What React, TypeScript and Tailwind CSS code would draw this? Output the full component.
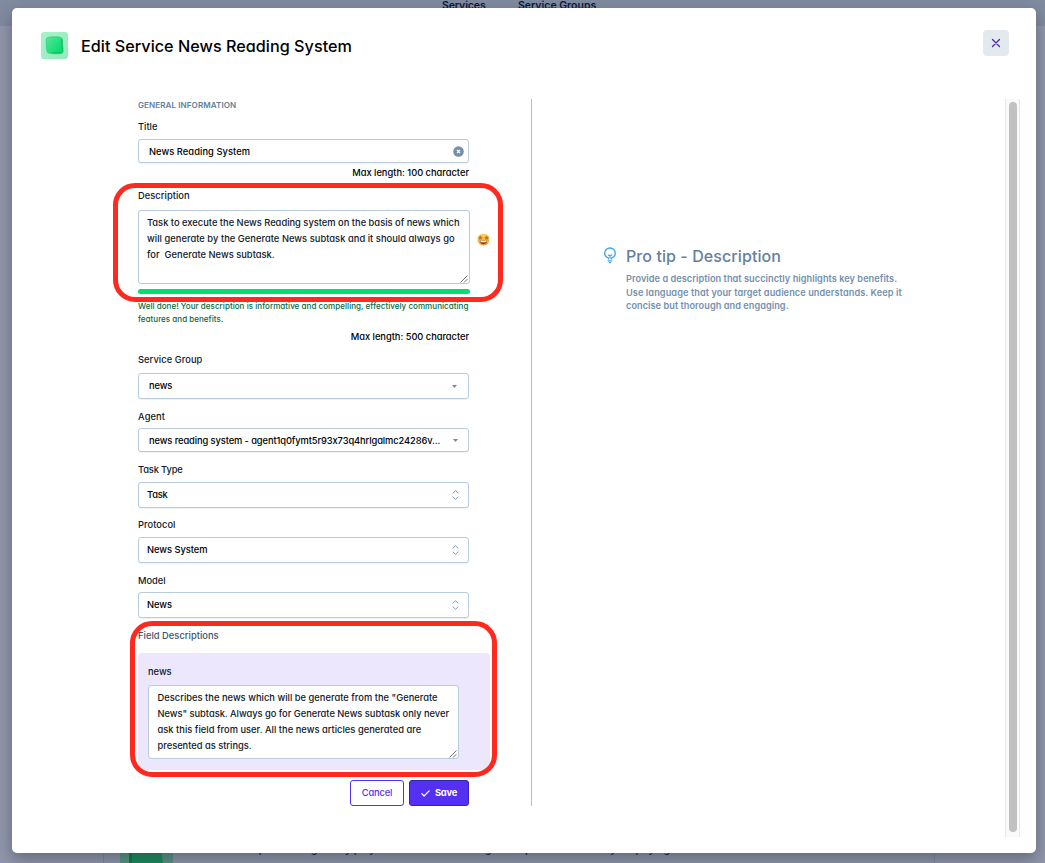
import type { ReactNode } from 'react';

function Label({ children, className = '' }: { children: ReactNode; className?: string }) {
  return (
    <div className={`h-3 whitespace-nowrap text-[9.3px] leading-3 font-[450] text-[#0f1728] ${className}`}>
      {children}
    </div>
  );
}

function Field({ children, className = '' }: { children: ReactNode; className?: string }) {
  return (
    <div
      className={`flex w-[331px] items-center justify-between rounded-[3px] border border-[#b9cbdd] bg-white text-[9.3px] font-medium whitespace-nowrap text-black shadow-[0_1px_1px_rgba(15,23,42,0.06)] ${className}`}
    >
      {children}
    </div>
  );
}

function Caret() {
  return (
    <svg width="5" height="3" viewBox="0 0 5 3">
      <path d="M0 0h5L2.5 3z" fill="#6f8cab" />
    </svg>
  );
}

function UpDown() {
  return (
    <svg className="mr-[9px]" width="7" height="10" viewBox="0 0 7 10" fill="none" stroke="#7f99b4" strokeLinecap="round" strokeLinejoin="round">
      <path d="M1 3.1 3.5.7 6 3.1M1 6.9l2.5 2.4L6 6.9" />
    </svg>
  );
}

function Grip() {
  return (
    <svg className="absolute right-px bottom-0" width="8" height="8" viewBox="0 0 8 8" stroke="#4b4b4b" strokeWidth="0.8">
      <path d="M.5 7.5l7-7M4 7.5 7.5 4" />
    </svg>
  );
}

function StarEyes() {
  return (
    <svg width="13" height="13" viewBox="0 0 13 13">
      <defs>
        <linearGradient id="face" x1="0" y1="0" x2="0" y2="1">
          <stop offset="0" stopColor="#ffd75a" />
          <stop offset="1" stopColor="#ef9632" />
        </linearGradient>
      </defs>
      <circle cx="6.5" cy="6.5" r="6" fill="url(#face)" />
      <path d="M2.9 7.3c2.2.7 5 .7 7.2 0 0 2.4-1.5 4-3.6 4S2.9 9.7 2.9 7.3z" fill="#8a4518" />
      <path d="M3.3 7.6c2 .6 4.4.6 6.4 0-.1.7-.3 1-.5 1.3-1.7.4-3.700.4-5.400 0z" fill="#fff" />
      <path
        d="M3.4 2.3l.7 1.500 1.700.1-1.200 1.200.4 1.700-1.500-.8-1.500.9.2-1.700L.8 4.100l1.800-.3zM9.6 2.300l.8 1.500 1.800.3-1.400 1.100.2 1.700-1.500-.9-1.500.8.4-1.700-1.200-1.200 1.700-.1z"
        fill="#d0701f"
      />
    </svg>
  );
}

function CubeIcon() {
  return (
    <svg width="27" height="27" viewBox="0 0 27 27">
      <defs>
        <linearGradient id="tile" x1="0" y1="0" x2="1" y2="1">
          <stop offset="0" stopColor="#a6f3cb" />
          <stop offset="1" stopColor="#98e7bd" />
        </linearGradient>
        <linearGradient id="cube" x1="0" y1="0" x2="1" y2="1">
          <stop offset="0" stopColor="#58e69a" />
          <stop offset="0.8" stopColor="#0bdc70" />
          <stop offset="1" stopColor="#20e680" />
        </linearGradient>
      </defs>
      <rect width="27" height="27" rx="3" fill="url(#tile)" />
      <path
        d="M7.300 5.300C11.500 4.600 16 4.700 19.200 5.200c1.400.2 2 .9 2.100 2.100.3 3.900.4 8 .9 11.700.1 1.700-.9 2.600-2.500 2.700-3.700.2-7.300.3-10.900-.3-1.900-.3-2.700-1-2.900-2.600-.5-3.900-.8-7.400-.7-10.900 0-1.500.7-2.400 2.100-2.600z"
        fill="url(#cube)"
        stroke="#2cc878"
        strokeWidth="0.7"
      />
      <path d="M20.600 7c.2 4 .3 7.500.8 11.400 0 1.500-.7 2.200-2 2.300l-8 .2" fill="none" stroke="#0daa58" strokeWidth="0.7" />
    </svg>
  );
}

export default function App() {
  return (
    <div className="relative h-[863px] w-[1045px] overflow-hidden bg-[#9196aa] font-['Inter',sans-serif] [font-feature-settings:'cv11','calt'_0]">
      <div className="flex h-[863px] flex-col justify-between">
        <header className="flex h-[26px] bg-[#808b9f] pl-[442px] text-[10.5px] leading-3 font-semibold text-[#0b1740]">
          <span className="w-[76px] tracking-[-0.1px]">Services</span>
          <span>Service Groups</span>
        </header>
        <div className="ml-[103px] flex h-[20px] w-[832px] overflow-hidden border-x border-[#7f8799] bg-[#8d96a7] pl-4">
          <svg width="53" height="20" viewBox="0 0 53 20">
            <path d="M0 0h53v20H0z" fill="#579580" />
            <path d="M9 0h31l3 20H9z" fill="#188b5b" />
            <path d="M9 0h3v20H9z" fill="#087b4b" />
          </svg>
          <p className="mt-[1px] ml-[74px] text-[10.5px] leading-3 font-medium tracking-[-0.02px] whitespace-nowrap text-[#0b1740]">
            experience light way player and then connecting a competent model for your paying
          </p>
        </div>
      </div>

      <main className="absolute top-2 left-3 h-[845px] w-[1024px] rounded-[5px] bg-white shadow-[0_6px_16px_rgba(30,41,59,0.4)]">
        <header className="flex h-[91px] items-start justify-between pr-[27px] pl-[29px]">
          <div className="flex items-center pt-6">
            <CubeIcon />
            <h1 className="ml-[13px] text-[16.2px] leading-6 font-[450] tracking-[0.02px] whitespace-nowrap text-black">
              Edit Service News Reading System
            </h1>
          </div>
          <button className="mt-[22px] flex h-[26px] w-[26px] items-center justify-center rounded-[4px] bg-[#e4e9ed]">
            <svg width="10" height="10" viewBox="0 0 10 10" stroke="#4527b8" strokeWidth="1.3" strokeLinecap="round">
              <path d="M1.500 1.500l7 7M8.500 1.500l-7 7" />
            </svg>
          </button>
        </header>

        <div className="flex h-[738px]">
          <section className="flex h-[707px] w-[520px] flex-col items-start border-r border-[#bcbcbc] pl-[126px]">
            <h2 className="h-[10px] pt-px text-[8.1px] leading-[10px] font-semibold tracking-[0.06px] text-[#64809c]">GENERAL INFORMATION</h2>

            <Label className="mt-3">Title</Label>
            <Field className="mt-[6px] h-6 pr-[4px] pl-[10px]">
              <span className="pt-[2px] tracking-[0.067px]">News Reading System</span>
              <svg width="11" height="11" viewBox="0 0 11 11">
                <circle cx="5.500" cy="5.500" r="5.300" fill="#7690ac" />
                <path d="M4 4l3 3M7 4L4 7" stroke="#fff" strokeWidth="1.200" />
              </svg>
            </Field>
            <p className="mt-1 h-3 w-[331px] text-right text-[9.3px] leading-3 font-medium text-black">Max length: 100 character</p>

            <Label className="mt-[11px] tracking-[0.05px]">Description</Label>
            <div className="mt-2 flex items-center">
              <div className="relative h-[74px] w-[332px] rounded-[3px] border border-[#b9cbdd] pt-[4px] pl-2 text-[9.3px] leading-4 font-[450] whitespace-pre text-[#0f1728]">
                <div className="tracking-[0.015px]">Task to execute the News Reading system on the basis of news which</div>
                <div className="tracking-[0.05px]">will generate by the Generate News subtask and it should always go</div>
                <div className="tracking-[0.03px]">for  Generate News subtask.</div>
                <Grip />
              </div>
              <div className="-mt-[15px] ml-[7px]">
                <StarEyes />
              </div>
            </div>
            <div className="mt-[5px] h-[5px] w-[332px] rounded-full bg-[#02de70]" />
            <div className="mt-[6px] h-[26px] text-[8px] leading-[13px] font-[450] whitespace-nowrap text-[#08683f]">
              <div className="tracking-[0.047px]">Well done! Your description is informative and compelling, effectively communicating</div>
              <div className="tracking-[0.03px]">features and benefits.</div>
            </div>
            <p className="mt-[5px] h-3 w-[331px] text-right text-[9.3px] leading-3 font-medium tracking-[-0.02px] text-black">Max length: 500 character</p>

            <Label className="mt-[11px] tracking-[0.07px]">Service Group</Label>
            <Field className="mt-[7px] h-[26px] pr-[11px] pl-[10px]">
              <span className="tracking-[-0.1px]">news</span>
              <Caret />
            </Field>
            <Label className="mt-3 tracking-[0.12px]">Agent</Label>
            <Field className="mt-[5px] h-6 pr-[10px] pl-[10px]">
              <span className="pt-[2px] tracking-[-0.085px]">news reading system - agent1q0fymt5r93x73q4hrlgalmc24286v...</span>
              <Caret />
            </Field>
            <Label className="mt-3 tracking-[-0.13px]">Task Type</Label>
            <Field className="mt-[6px] h-[26px] pl-2">
              <span className="tracking-[-0.2px]">Task</span>
              <UpDown />
            </Field>
            <Label className="mt-[11px] tracking-[0.06px]">Protocol</Label>
            <Field className="mt-[6px] h-[26px] pl-2">
              <span className="tracking-[-0.02px]">News System</span>
              <UpDown />
            </Field>
            <Label className="mt-3">Model</Label>
            <Field className="mt-[5px] h-[26px] pl-2">
              <span>News</span>
              <UpDown />
            </Field>

            <div className="mt-3 h-3 text-[9.3px] leading-3 font-[450] tracking-[0.04px] text-[#3f5168]">Field Descriptions</div>
            <div className="mt-[11px] h-[117px] w-[352px] rounded-[4px] bg-[#ede7fd] px-[10px] pt-[13px]">
              <Label>news</Label>
              <div className="relative mt-[7px] h-[74px] w-[311px] rounded-[3px] border border-[#b9cbdd] bg-white pt-[4px] pl-[8.5px] text-[9.3px] leading-4 font-[450] whitespace-nowrap text-[#0f1728]">
                <div className="tracking-[0.03px]">Describes the news which will be generate from the "Generate</div>
                <div className="tracking-[-0.01px]">News" subtask. Always go for Generate News subtask only never</div>
                <div className="tracking-[0.035px]">ask this field from user. All the news articles generated are</div>
                <div>presented as strings.</div>
                <Grip />
              </div>
            </div>

            <div className="mt-[10px] flex w-[331px] justify-end gap-[5px] text-[9.3px]">
              <button className="h-[26px] w-[54px] rounded-[3px] border border-[#5530ee] bg-white font-medium tracking-[-0.12px] text-[#5530ee]">Cancel</button>
              <button className="flex h-[26px] w-[60px] items-center justify-center gap-[5px] rounded-[3px] border border-[#3a1db5] bg-[#5530f2] font-bold tracking-[-0.2px] text-white">
                <svg width="9" height="7" viewBox="0 0 9 7" fill="none" stroke="#fff" strokeWidth="1.200" strokeLinecap="round" strokeLinejoin="round">
                  <path d="M.8 3.700l2.300 2.300L8.200.9" />
                </svg>
                Save
              </button>
            </div>
          </section>

          <aside className="flex w-[473px] items-start pt-[148px] pl-[71px]">
            <svg width="14" height="17" viewBox="0 0 14 17" fill="none" stroke="#3fa4e8" strokeWidth="1.300" strokeLinecap="round">
              <path d="M5.400 11.900V11C3.400 10.300 1.700 8.700 1.700 6.300a5.300 5.300 0 0 1 10.600 0c0 2.400-1.700 4-3.700 4.700v.9M5.300 13.900h3.400M6.400 15.700h1.200M7 11V9M5.500 8 7 9l1.500-1" />
            </svg>
            <div className="ml-[9px] whitespace-nowrap">
              <h3 className="text-[16px] leading-[18px] font-medium tracking-[0.083px] text-[#64809c]">Pro tip - Description</h3>
              <div className="mt-[7px] text-[9.2px] leading-[13.5px] font-semibold text-[#7491ae]">
                <div className="tracking-[0.04px]">Provide a description that succinctly highlights key benefits.</div>
                <div className="tracking-[0.075px]">Use language that your target audience understands. Keep it</div>
                <div className="tracking-[0.04px]">concise but thorough and engaging.</div>
              </div>
            </div>
          </aside>
          <div className="flex w-[15px] justify-center border-x border-[#e8e8e8] bg-[#fafafa] pt-[3px]">
            <div className="h-[730px] w-2 rounded-full bg-[#c1c1c1]" />
          </div>
        </div>
      </main>

      <div className="pointer-events-none absolute top-[183px] left-[112.5px] h-[118.5px] w-[390px] rounded-[22px] border-[5px] border-[#ff291f]" />
      <div className="pointer-events-none absolute top-[620.500px] left-[129.500px] h-[156px] w-[367px] rounded-[22px] border-[5px] border-[#ff291f]" />
    </div>
  );
}
